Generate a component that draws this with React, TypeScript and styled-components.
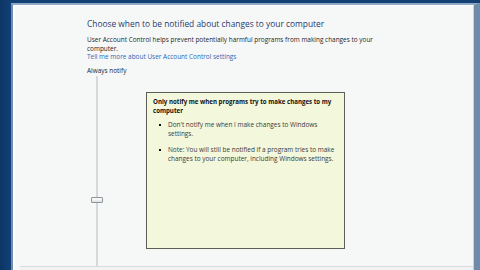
import React from "react";
import styled, { createGlobalStyle } from "styled-components";

const GlobalStyle = createGlobalStyle`
  html, body {
    margin: 0;
    padding: 0;
    width: 480px;
    height: 270px;
    overflow: hidden;
    background: #0f3b6e;
  }
  * {
    box-sizing: border-box;
  }
`;

const Desktop = styled.div`
  width: 480px;
  height: 270px;
  display: flex;
  padding-top: 3px;
  background: linear-gradient(90deg, #0d3566 0px, #123f74 10px);
`;

const Frame = styled.div`
  flex: 1;
  margin-left: 11px;
  display: flex;
  border-left: 2px solid #6d8fb5;
  border-top: 2px solid #8ea8c6;
  border-right: 6px solid #6f8bab;
  background: #dfe6ee;
`;

const Window = styled.div`
  flex: 1;
  display: flex;
  flex-direction: column;
  border-left: 2px solid #ffffff;
  border-top: 1px solid #ffffff;
  border-right: 1px solid #c7d2de;
  background: #f6f8f8;
`;

const Content = styled.div`
  flex: 1;
  display: flex;
  flex-direction: column;
  padding: 11px 0 0 72px;
  font-family: "Open Sans", "Noto Sans", sans-serif;
  min-height: 0;
`;

const Heading = styled.h1`
  margin: 0;
  font-size: 8.4px;
  font-weight: 400;
  color: #1e3a6e;
  line-height: 13px;
`;

const Desc = styled.p`
  margin: 6px 0 0;
  width: 300px;
  font-size: 6.45px;
  line-height: 8.5px;
  color: #1f1f1f;
`;

const HelpLink = styled.a`
  display: block;
  font-size: 6.45px;
  line-height: 8.5px;
  color: #2a66b6;
  text-decoration: none;
`;

const SliderLabel = styled.div`
  margin-top: 5px;
  font-size: 6.45px;
  line-height: 8.5px;
  color: #1f1f1f;
`;

const SliderArea = styled.div`
  flex: 1;
  display: flex;
  min-height: 0;
`;

const TrackColumn = styled.div`
  position: relative;
  width: 59px;
  flex-shrink: 0;
  display: flex;
  justify-content: flex-start;
  padding-left: 9px;
`;

const Track = styled.div`
  width: 2px;
  height: 100%;
  margin-top: 1px;
  background: #d6d9dc;
`;

const Thumb = styled.div<{ $top: number }>`
  position: absolute;
  left: 4px;
  top: ${(p) => p.$top}px;
  width: 12px;
  height: 6px;
  border: 1px solid #8f9499;
  border-radius: 1px;
  background: linear-gradient(#ffffff, #dde1e5);
`;

const InfoBox = styled.div`
  width: 199px;
  height: 157px;
  margin-top: 17px;
  padding: 5px 5px 5px 6px;
  background: #f3f7dc;
  border: 1px solid #5d5f57;
  color: #1e1e1e;
`;

const InfoTitle = styled.div`
  font-size: 6.15px;
  line-height: 8.5px;
  font-weight: 700;
  color: #111;
`;

const BulletList = styled.ul`
  margin: 6px 0 0;
  padding: 0;
  list-style: none;
  display: flex;
  flex-direction: column;
  gap: 8px;
`;

const Bullet = styled.li`
  display: flex;
  font-size: 6.45px;
  line-height: 8.5px;
  color: #3a3a3a;

  &::before {
    content: "";
    flex-shrink: 0;
    width: 2px;
    height: 2px;
    margin: 3px 7px 0 6px;
    background: #111;
  }
`;

const Footer = styled.div`
  height: 4px;
  margin-left: 5px;
  border-top: 1px solid #d9dcdf;
  background: #f0f2f3;
`;

export default function App() {
  return (
    <>
      <GlobalStyle />
      <Desktop>
        <Frame>
          <Window>
            <Content>
              <Heading>Choose when to be notified about changes to your computer</Heading>
              <Desc>
                User Account Control helps prevent potentially harmful programs from making changes to your
                computer.
              </Desc>
              <HelpLink href="#">Tell me more about User Account Control settings</HelpLink>
              <SliderLabel>Always notify</SliderLabel>
              <SliderArea>
                <TrackColumn>
                  <Track />
                  <Thumb $top={122} />
                </TrackColumn>
                <InfoBox>
                  <InfoTitle>Only notify me when programs try to make changes to my computer</InfoTitle>
                  <BulletList>
                    <Bullet>Don't notify me when I make changes to Windows settings.</Bullet>
                    <Bullet>
                      Note: You will still be notified if a program tries to make changes to your computer,
                      including Windows settings.
                    </Bullet>
                  </BulletList>
                </InfoBox>
              </SliderArea>
            </Content>
            <Footer />
          </Window>
        </Frame>
      </Desktop>
    </>
  );
}
